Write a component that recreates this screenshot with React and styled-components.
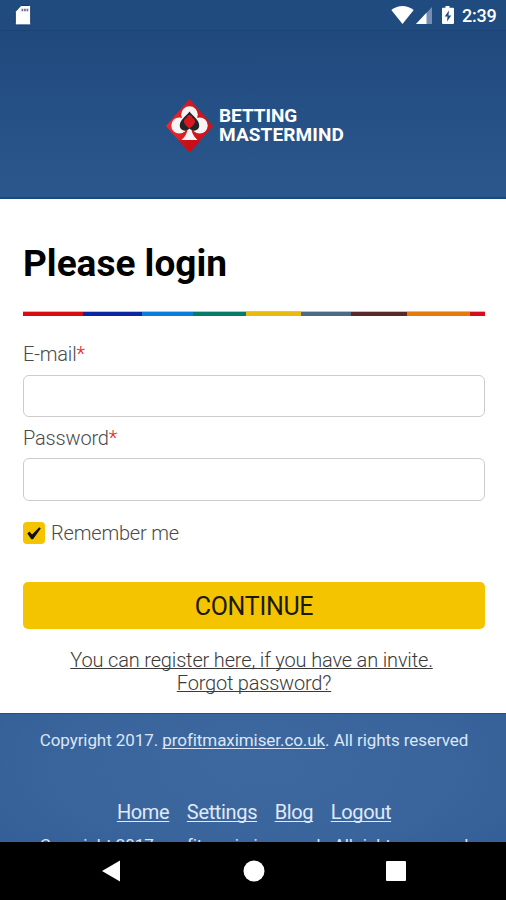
import React from "react";
import styled, { createGlobalStyle } from "styled-components";

const Global = createGlobalStyle`
  * { box-sizing: border-box; }
  body { margin: 0; font-family: Roboto, "Liberation Sans", sans-serif; }
`;
const Screen = styled.div`
  width: 506px;
  height: 900px;
  display: flex;
  flex-direction: column;
  overflow: hidden;
  background: #fff;
`;
const StatusBar = styled.div`
  height: 31px;
  flex: none;
  display: flex;
  align-items: flex-start;
  justify-content: space-between;
  padding: 4px 8px 0 13px;
  background: #204b7f;
  border-bottom: 1px solid #1b4375;
`;
const StatusGroup = styled.div`
  display: flex;
  align-items: flex-start;
`;
const BatterySlot = styled.span`
  display: flex;
  margin-left: 8px;
`;
const Clock = styled.span`
  width: 36px;
  margin-left: 7px;
  color: #fff;
  font-size: 18px;
  font-weight: 500;
  line-height: 24px;
  letter-spacing: -0.2px;
  white-space: nowrap;
`;
const Header = styled.header`
  height: 168px;
  flex: none;
  display: flex;
  align-items: flex-start;
  padding: 67px 0 0 165px;
  background: linear-gradient(180deg, #204a7e 0%, #2b578d 100%);
  border-bottom: 2px solid #1b4a83;
`;
const BrandName = styled.div`
  padding: 8px 0 0 5px;
  color: #fff;
  font-size: 19px;
  font-weight: 700;
  line-height: 19px;
`;
const BrandLine = styled.div`
  letter-spacing: ${(p) => p.$spacing};
  white-space: nowrap;
`;
const Form = styled.main`
  height: 514px;
  flex: none;
  display: flex;
  flex-direction: column;
  padding: 42px 21px 0 23px;
`;
const Title = styled.h1`
  margin: 0;
  height: 70px;
  color: #000;
  font-size: 37px;
  font-weight: 700;
  line-height: 45px;
`;
const Stripe = styled.div`
  height: 5px;
  display: flex;
  border-top: 1px solid #c9bcbc;
`;
const Segment = styled.i`
  width: ${(p) => p.$width}px;
  background: ${(p) => p.$color};
`;
const Label = styled.label`
  margin-top: ${(p) => p.$top}px;
  height: ${(p) => p.$height}px;
  color: #4a4a4a;
  font-size: 20px;
  font-weight: 300;
  line-height: 24px;
  letter-spacing: -0.18px;
`;
const Required = styled.span`
  color: #e8202a;
`;
const Input = styled.input`
  width: 100%;
  height: ${(p) => p.$height}px;
  flex: none;
  padding: 0 10px;
  border: 1px solid #ccc;
  border-radius: 6px;
  background: #fff;
  outline: none;
`;
const Remember = styled.div`
  display: flex;
  align-items: center;
  gap: 7px;
  height: 24px;
  margin-top: 20px;
  color: #4a4a4a;
  font-size: 20px;
  font-weight: 300;
  letter-spacing: -0.18px;
`;
const Check = styled.span`
  width: 22px;
  height: 22px;
  margin-right: -1px;
  display: flex;
  align-items: center;
  justify-content: center;
  border-radius: 4px;
  background: #f5c400;
`;
const Button = styled.button`
  width: 100%;
  height: 47px;
  flex: none;
  margin-top: 37px;
  padding: 1px 0 0;
  border: 0;
  border-radius: 5px;
  background: #f5c400;
  color: #1c1903;
  font-family: inherit;
  font-size: 25px;
  font-weight: 400;
  letter-spacing: -0.3px;
`;
const Links = styled.div`
  display: flex;
  flex-direction: column;
  align-items: center;
  margin-top: 20px;
`;
const TextLink = styled.a`
  margin-right: ${(p) => p.$shift || 0}px;
  color: #3a3a3a;
  font-size: 20px;
  font-weight: 300;
  line-height: 23px;
  letter-spacing: ${(p) => p.$spacing};
  text-decoration: underline;
  text-decoration-skip-ink: none;
  text-underline-offset: 1px;
  text-decoration-thickness: 1px;
`;
const Footer = styled.footer`
  height: 129px;
  flex: none;
  overflow: hidden;
  border-top: 1px solid #234f88;
  background: radial-gradient(ellipse 75% 130% at 50% 40%, #3d689f 0%, #3a649c 50%, #315b94 100%);
`;
const Copyright = styled.div`
  height: 24px;
  margin-top: ${(p) => p.$top}px;
  padding-left: 2px;
  color: #dce6f4;
  font-size: 17px;
  line-height: 24px;
  text-align: center;
  letter-spacing: -0.07px;
  white-space: nowrap;
`;
const FooterLink = styled.a`
  text-decoration: underline;
  text-decoration-skip-ink: none;
  text-underline-offset: 2px;
  text-decoration-thickness: 1px;
`;
const FooterNav = styled.nav`
  display: flex;
  justify-content: center;
  gap: 17.5px;
  margin-top: 48px;
  padding-left: 2px;
  color: #e0e9f6;
  font-size: 20px;
  line-height: 24px;
  letter-spacing: -0.34px;
`;
const NavBar = styled.div`
  height: 58px;
  flex: none;
  display: flex;
  justify-content: space-between;
  align-items: center;
  padding: 0 100px 0 101px;
  background: #000;
`;

const SdCard = () => (
  <svg width="20" height="22" viewBox="0 0 20 22">
    <path d="M8 1.500h8.500q1.200 0 1.200 1.200v17q0 1.200-1.200 1.200H3.500q-1.200 0-1.200-1.200V7.500z" fill="#fff" stroke="#153b72" strokeWidth="1" />
    <path d="M8.500 6h7" stroke="#776f9c" strokeWidth="2.400" strokeDasharray="1.800 .7" />
  </svg>
);
const Wifi = () => (
  <svg width="24" height="22" viewBox="0 0 24 22">
    <path d="M11.500 20L.3 6Q11.500-2 22.700 6z" fill="#fff" />
  </svg>
);
const Signal = () => (
  <svg width="18" height="22" viewBox="0 0 18 22">
    <path d="M17 3v17H1z" fill="#7590b4" />
    <path d="M11.500 8.800V20H1z" fill="#fff" />
  </svg>
);
const Battery = () => (
  <svg width="14" height="22" viewBox="0 0 14 22">
    <path d="M4.500 2h4v1.700H12a1 1 0 0 1 1 1V19a1 1 0 0 1-1 1H2a1 1 0 0 1-1-1V4.700a1 1 0 0 1 1-1h2.500z" fill="#fff" />
    <path d="M8 6.500L3.700 12.500h2.800L6 17.500l4.300-6H7.500z" fill="#204b7f" />
  </svg>
);
const Logo = () => (
  <svg width="49" height="56" viewBox="0 0 49 56">
    <defs>
      <linearGradient id="diamond" x1="0" y1="0" x2="1" y2="0">
        <stop offset="0" stopColor="#f02b32" />
        <stop offset=".5" stopColor="#d31820" />
        <stop offset="1" stopColor="#cd1219" />
      </linearGradient>
    </defs>
    <path d="M24.500 1L48 28 24.500 54.500 1 28z" fill="url(#diamond)" />
    <path d="M13 42H36L24.500 54.500z" fill="#bc0910" opacity=".55" />
    <g fill="#f6f4f4">
      <circle cx="24.500" cy="16.500" r="8.300" />
      <circle cx="14.300" cy="27.500" r="8" />
      <circle cx="34.700" cy="27.500" r="8" />
      <path d="M18 17h13l4 15H14z" />
      <path d="M22.800 29h3.400q.3 8 6.300 13H16.500q6-5 6.300-13z" />
    </g>
    <path d="M24.500 13.500C27 17.500 34.200 21.500 34.200 27.500c0 5-6 7-9.700 3-3.700 4-9.700 2-9.700-3 0-6 7.200-10 9.700-14z" fill="#242326" />
    <path d="M24.500 31C23 28.500 19 27 19 23.500c0-2 1.200-3 2.500-3.200 0-2 1.400-3.300 3-3.300s3 1.300 3 3.300c1.300.2 2.500 1.200 2.500 3.200 0 3.500-4 5-5.500 7.500z" fill="#d91720" />
  </svg>
);
const CheckMark = () => (
  <svg width="16" height="14" viewBox="0 0 16 14">
    <path d="M1.300 7.500L3.400 5.600 6 8.400 13.300 1.300l1.500 1.200L7 13.200H5.300z" fill="#111" />
  </svg>
);

const STRIPES = [
  [60, "#d80d12"], [59, "#0c26a3"], [51, "#087ee0"], [53, "#057b69"], [55, "#e9bb0c"],
  [50, "#496b87"], [56, "#592829"], [63, "#e87a0c"], [15, "#d80d1b"],
];

export default function App() {
  return (
    <Screen>
      <Global />
      <StatusBar>
        <SdCard />
        <StatusGroup>
          <Wifi />
          <Signal />
          <BatterySlot><Battery /></BatterySlot>
          <Clock>2:39</Clock>
        </StatusGroup>
      </StatusBar>
      <Header>
        <Logo />
        <BrandName>
          <BrandLine $spacing="-0.05px">BETTING</BrandLine>
          <BrandLine $spacing="0.1px">MASTERMIND</BrandLine>
        </BrandName>
      </Header>
      <Form>
        <Title>Please login</Title>
        <Stripe>
          {STRIPES.map(([width, color]) => <Segment key={color} $width={width} $color={color} />)}
        </Stripe>
        <Label $top={26} $height={33} htmlFor="email">E-mail<Required>*</Required></Label>
        <Input $height={42} id="email" />
        <Label $top={9} $height={32} htmlFor="password">Password<Required>*</Required></Label>
        <Input $height={43} id="password" type="password" />
        <Remember><Check><CheckMark /></Check>Remember me</Remember>
        <Button>CONTINUE</Button>
        <Links>
          <TextLink $spacing="-0.16px" $shift={5}>You can register here, if you have an invite.</TextLink>
          <TextLink $spacing="-0.2px">Forgot password?</TextLink>
        </Links>
      </Form>
      <Footer>
        <Copyright $top={14}>Copyright 2017. <FooterLink>profitmaximiser.co.uk</FooterLink>. All rights reserved</Copyright>
        <FooterNav>
          <FooterLink>Home</FooterLink>
          <FooterLink>Settings</FooterLink>
          <FooterLink>Blog</FooterLink>
          <FooterLink>Logout</FooterLink>
        </FooterNav>
        <Copyright $top={9}>Copyright 2017. <FooterLink>profitmaximiser.co.uk</FooterLink>. All rights reserved</Copyright>
      </Footer>
      <NavBar>
        <svg width="20" height="22" viewBox="0 0 20 22"><path d="M1 11L19 .500V21.500z" fill="#fff" /></svg>
        <svg width="22" height="22" viewBox="0 0 22 22"><circle cx="11" cy="11" r="10.500" fill="#fff" /></svg>
        <svg width="20" height="20" viewBox="0 0 20 20"><rect width="20" height="20" rx="1" fill="#fff" /></svg>
      </NavBar>
    </Screen>
  );
}
